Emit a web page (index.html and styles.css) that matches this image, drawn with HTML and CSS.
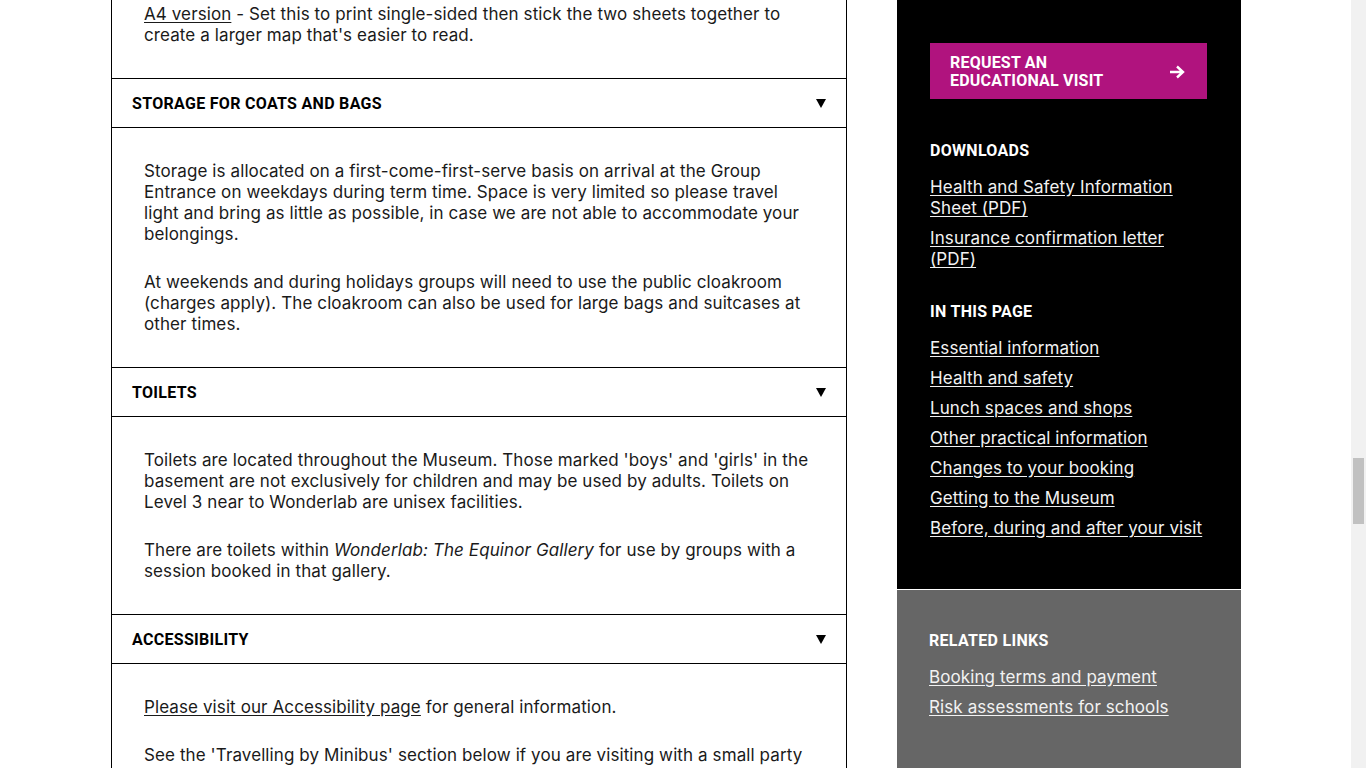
FILE: index.html
```html
<!DOCTYPE html>
<html lang="en">
<head>
<meta charset="utf-8">
<title>Planning your visit</title>
<link rel="stylesheet" href="styles.css">
</head>
<body>
<div class="page">
  <main class="main">
    <div class="panel panel-first">
      <p><a href="#">A4 version</a> - Set this to print single-sided then stick the two sheets together to create a larger map that's easier to read.</p>
    </div>

    <div class="acc-head">
      <h2>Storage for coats and bags</h2>
      <svg class="tri" width="10" height="9" viewBox="0 0 10 9"><polygon points="0,0 10,0 5,9" fill="#000"/></svg>
    </div>
    <div class="panel">
      <p>Storage is allocated on a first-come-first-serve basis on arrival at the Group Entrance on weekdays during term time. Space is very limited so please travel light and bring as little as possible, in case we are not able to accommodate your belongings.</p>
      <p>At weekends and during holidays groups will need to use the public cloakroom (charges apply). The cloakroom can also be used for large bags and suitcases at other times.</p>
    </div>

    <div class="acc-head">
      <h2>Toilets</h2>
      <svg class="tri" width="10" height="9" viewBox="0 0 10 9"><polygon points="0,0 10,0 5,9" fill="#000"/></svg>
    </div>
    <div class="panel">
      <p>Toilets are located throughout the Museum. Those marked 'boys' and 'girls' in the basement are not exclusively for children and may be used by adults. Toilets on Level 3 near to Wonderlab are unisex facilities.</p>
      <p>There are toilets within <em>Wonderlab: The Equinor Gallery</em> for use by groups with a session booked in that gallery.</p>
    </div>

    <div class="acc-head">
      <h2>Accessibility</h2>
      <svg class="tri" width="10" height="9" viewBox="0 0 10 9"><polygon points="0,0 10,0 5,9" fill="#000"/></svg>
    </div>
    <div class="panel">
      <p><a href="#">Please visit our Accessibility page</a> for general information.</p>
      <p>See the 'Travelling by Minibus' section below if you are visiting with a small party of wheelchair users.</p>
    </div>
  </main>

  <aside class="side">
    <div class="side-dark">
      <a class="cta" href="#">
        <span class="cta-text">Request an<br>educational visit</span>
        <svg class="cta-arrow" width="16" height="14" viewBox="0 0 16 14"><path d="M1 7 H14 M8 1.5 L14 7 L8 12.5" fill="none" stroke="#fff" stroke-width="2.4"/></svg>
      </a>

      <section class="side-sec">
        <h3>Downloads</h3>
        <ul>
          <li><a href="#">Health and Safety Information Sheet (PDF)</a></li>
          <li><a href="#">Insurance confirmation letter (PDF)</a></li>
        </ul>
      </section>

      <section class="side-sec">
        <h3>In this page</h3>
        <ul>
          <li><a href="#">Essential information</a></li>
          <li><a href="#">Health and safety</a></li>
          <li><a href="#">Lunch spaces and shops</a></li>
          <li><a href="#">Other practical information</a></li>
          <li><a href="#">Changes to your booking</a></li>
          <li><a href="#">Getting to the Museum</a></li>
          <li><a href="#">Before, during and after your visit</a></li>
        </ul>
      </section>
    </div>

    <div class="side-grey">
      <section class="side-sec">
        <h3>Related links</h3>
        <ul>
          <li><a href="#">Booking terms and payment</a></li>
          <li><a href="#">Risk assessments for schools</a></li>
        </ul>
      </section>
    </div>
  </aside>
</div>
<div class="scrollbar"><div class="thumb"></div></div>
</body>
</html>
```

FILE: styles.css
```css
html, body {
  margin: 0;
  padding: 0;
  overflow: hidden;
  background: #fff;
}

body {
  font-family: "Inter", "Liberation Sans", sans-serif;
  font-size: 17px;
  line-height: 21px;
  letter-spacing: 0.1px;
  color: #1a1a1a;
}

.page {
  display: flex;
  align-items: flex-start;
  gap: 50px;
  width: 1130px;
  margin-left: 111px;
}

.main {
  width: 736px;
  flex: none;
}

.panel {
  border-left: 1px solid #000;
  border-right: 1px solid #000;
  padding: 33px 33px 32px 32px;
}

.panel-first {
  padding-top: 4px;
  padding-bottom: 32px;
}

.panel p {
  margin: 0 0 27px;
}

.panel p:last-child {
  margin-bottom: 0;
}

.panel a {
  color: #1a1a1a;
  text-decoration: underline;
  text-underline-offset: 2px;
}

.acc-head {
  display: flex;
  align-items: center;
  justify-content: space-between;
  height: 48px;
  border: 1px solid #000;
  padding: 0 20px;
}

.acc-head h2 {
  margin: 0;
  font-family: "Roboto", "Liberation Sans", sans-serif;
  font-weight: 700;
  font-size: 16px;
  text-transform: uppercase;
  color: #000;
  letter-spacing: 0.3px;
}

.tri {
  display: block;
}

.side {
  width: 344px;
  flex: none;
}

.side-dark {
  background: #000;
  padding: 43px 34px 50px 33px;
}

.side-grey {
  background: #666;
  margin-top: 1px;
  padding: 41px 32px 60px;
}

.cta {
  display: flex;
  align-items: center;
  justify-content: space-between;
  height: 56px;
  box-sizing: border-box;
  padding: 2px 22px 0 20px;
  background: #b0137e;
  color: #fff;
  text-decoration: none;
  font-family: "Roboto", "Liberation Sans", sans-serif;
  font-weight: 700;
  font-size: 16px;
  line-height: 18px;
  text-transform: uppercase;
  letter-spacing: 0.2px;
  margin-bottom: 42px;
}

.cta-arrow {
  display: block;
}

.side-sec + .side-sec {
  margin-top: 32px;
}

.side-sec h3 {
  margin: 0 0 16px;
  font-family: "Roboto", "Liberation Sans", sans-serif;
  font-weight: 700;
  font-size: 16px;
  line-height: 20px;
  text-transform: uppercase;
  color: #fff;
  letter-spacing: 0.3px;
}

.side-sec ul {
  list-style: none;
  margin: 0;
  padding: 0;
}

.side-sec li {
  margin-bottom: 9px;
}

.side-sec li:last-child {
  margin-bottom: 0;
}

.side-sec a {
  color: #f2f2f2;
  text-decoration: underline;
  text-underline-offset: 2px;
}

.scrollbar {
  position: fixed;
  top: 0;
  right: 0;
  width: 15px;
  height: 100%;
  background: #f1f1f1;
}

.thumb {
  position: absolute;
  left: 2px;
  top: 458px;
  width: 11px;
  height: 66px;
  background: #c1c1c1;
}
```
